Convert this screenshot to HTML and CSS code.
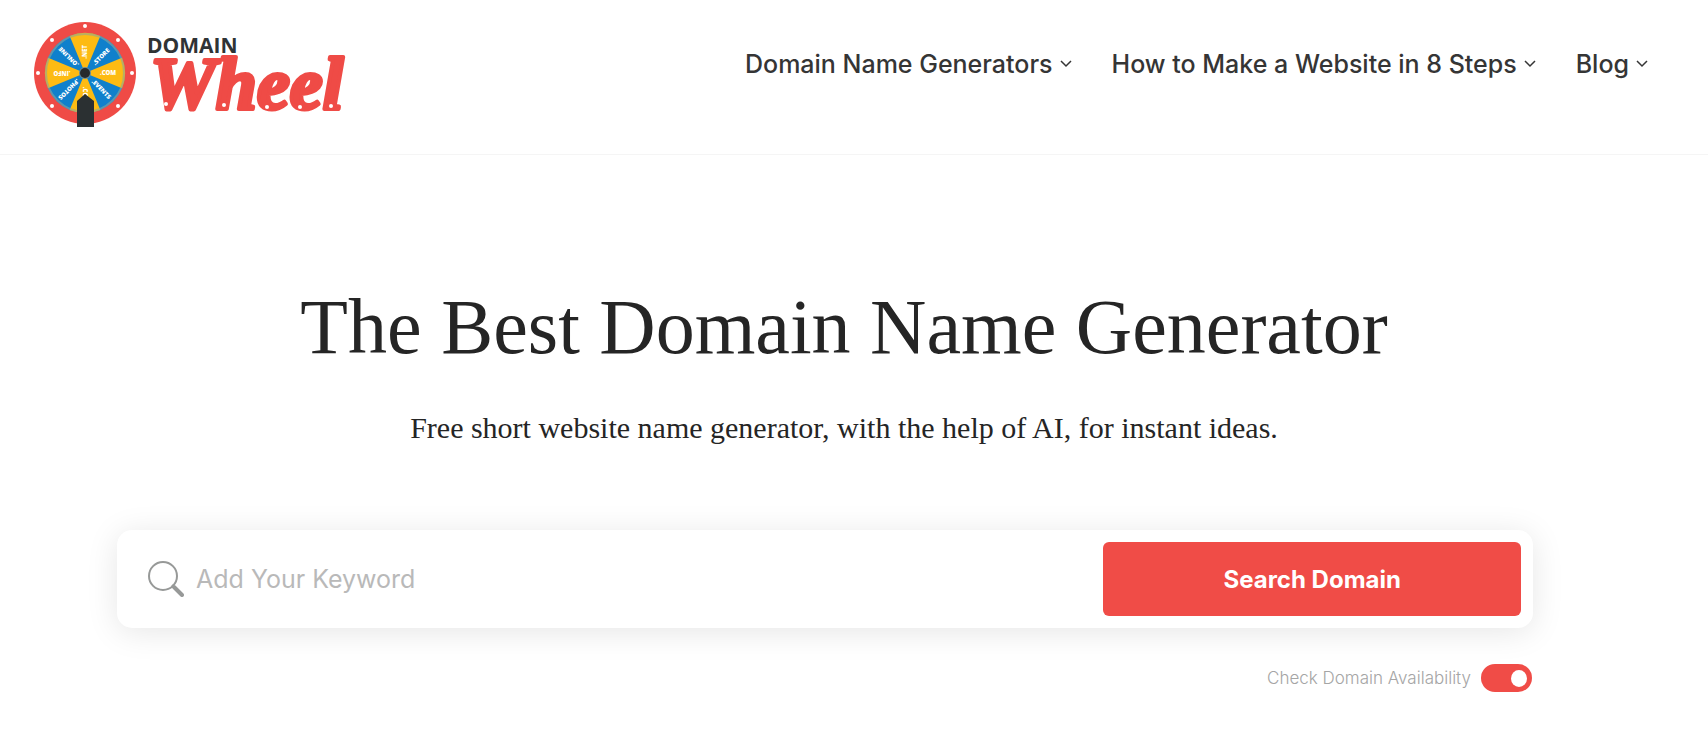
FILE: index.html
```html
<!DOCTYPE html>
<html lang="en">
<head>
  <meta charset="UTF-8">
  <meta name="viewport" content="width=device-width, initial-scale=1.0">
  <title>Domain Wheel</title>
  <link rel="stylesheet" href="styles.css">
</head>
<body>
  <header class="header">
    <a class="logo" href="#" aria-label="Domain Wheel">
      <svg width="316" height="106" viewBox="0 0 316 106">
        <!-- Wheel -->
        <circle cx="51" cy="51" r="51" fill="#ef4b46"/>
        <circle cx="51" cy="51" r="40" fill="#0f80cc"/>
        <g fill="#fdbb13">
          <path d="M51 51 L35.7 14 A40 40 0 0 1 66.3 14 Z"/>
          <path d="M51 51 L88 35.7 A40 40 0 0 1 88 66.3 Z"/>
          <path d="M51 51 L66.3 88 A40 40 0 0 1 35.7 88 Z"/>
          <path d="M51 51 L14 66.3 A40 40 0 0 1 14 35.7 Z"/>
        </g>
        <circle cx="51" cy="51" r="39" fill="none" stroke="#8aa79b" stroke-width="2" opacity="0.6"/>
        <g fill="#fff">
          <circle cx="51" cy="4" r="2"/>
          <circle cx="84" cy="18" r="2"/>
          <circle cx="98" cy="51" r="2"/>
          <circle cx="84" cy="84" r="2"/>
          <circle cx="18" cy="84" r="2"/>
          <circle cx="4" cy="51" r="2"/>
          <circle cx="18" cy="18" r="2"/>
        </g>
        <g class="wheel-text">
          <text x="74" y="53">.COM</text>
          <text x="74" y="53" transform="rotate(45 51 51)">.EVENTS</text>
          <text x="70" y="53" transform="rotate(90 51 51)">.CO</text>
          <text x="74" y="53" transform="rotate(135 51 51)">.PHOTOS</text>
          <text x="74" y="53" transform="rotate(180 51 51)">.INFO</text>
          <text x="74" y="53" transform="rotate(225 51 51)">.ONLINE</text>
          <text x="72" y="53" transform="rotate(270 51 51)">.NET</text>
          <text x="74" y="53" transform="rotate(315 51 51)">.STORE</text>
        </g>
        <circle cx="51" cy="51" r="6" fill="#63899a"/>
        <circle cx="51" cy="51" r="5" fill="#262b2d"/>
        <path d="M43 105 V79 L51 72 L60 79 V105 Z" fill="#2b3032"/>
        <!-- Name -->
        <text class="logo-top" x="113" y="31">DOMAIN</text>
        <text class="logo-name" x="116" y="87">Wheel</text>
        <g fill="#fff">
          <circle cx="132" cy="82" r="2"/>
          <circle cx="190" cy="83" r="2"/>
          <circle cx="233" cy="85" r="2"/>
          <circle cx="266" cy="85" r="2"/>
          <circle cx="297" cy="84" r="2"/>
        </g>
      </svg>
    </a>
    <nav class="nav">
      <a href="#">Domain Name Generators
        <svg class="chevron" width="12" height="8" viewBox="0 0 12 8"><path d="M1 1 L6 6 L11 1"/></svg>
      </a>
      <a href="#">How to Make a Website in 8 Steps
        <svg class="chevron" width="12" height="8" viewBox="0 0 12 8"><path d="M1 1 L6 6 L11 1"/></svg>
      </a>
      <a href="#">Blog
        <svg class="chevron" width="12" height="8" viewBox="0 0 12 8"><path d="M1 1 L6 6 L11 1"/></svg>
      </a>
    </nav>
  </header>

  <main class="hero">
    <h1>The Best Domain Name Generator</h1>
    <p class="subtitle">Free short website name generator, with the help of AI, for instant ideas.</p>

    <form class="search">
      <div class="search-box">
        <label class="search-icon" for="keyword" aria-label="Keyword">
          <svg width="36" height="36" viewBox="0 0 36 36">
            <circle cx="15" cy="15" r="14"/>
            <path class="handle" d="M26 26 L34 34"/>
            <path d="M24 24 L27 27"/>
          </svg>
        </label>
        <input type="text" id="keyword" class="keyword" placeholder="Add Your Keyword">
        <button type="submit" class="search-button">Search Domain</button>
      </div>
      <div class="availability">
        <label for="availability">Check Domain Availability</label>
        <input type="checkbox" id="availability" class="toggle" checked>
      </div>
    </form>
  </main>
</body>
</html>
```

FILE: styles.css
```css
* {
  box-sizing: border-box;
}
body {
  margin: 0;
  background-color: #fff;
  color: #252525;
  font-family: Inter, sans-serif;
}

/* Header */
.header {
  display: flex;
  justify-content: space-between;
  align-items: flex-start;
  padding: 22px 60px 26px 34px;
  border-bottom: 1px solid #f5f5f5;
}
.logo svg {
  display: block;
}
.wheel-text {
  fill: #fff;
  font-family: "Open Sans", sans-serif;
  font-size: 6px;
  font-weight: 800;
  text-anchor: middle;
}
.logo-top {
  fill: #2f3335;
  font-family: "Open Sans", sans-serif;
  font-size: 21px;
  font-weight: 700;
}
.logo-name {
  fill: #ef4b46;
  stroke: #ef4b46;
  stroke-width: 4px;
  stroke-linejoin: round;
  font-family: "Liberation Serif", serif;
  font-size: 74px;
  font-style: italic;
  font-weight: 700;
}
.nav {
  display: flex;
  gap: 40px;
  padding-top: 27px;
}
.nav a {
  display: flex;
  align-items: center;
  gap: 7px;
  color: #353535;
  font-family: Inter, sans-serif;
  font-size: 25px;
  font-weight: 500;
  line-height: 30px;
  text-decoration: none;
  white-space: nowrap;
}
.chevron {
  fill: none;
  stroke: #353535;
  stroke-width: 1.5px;
}

/* Hero */
.hero {
  padding: 120px 20px 40px 0;
  text-align: center;
}
h1 {
  margin: 0;
  font-family: "Liberation Serif", serif;
  font-size: 78px;
  font-weight: 400;
  line-height: 104px;
}
.subtitle {
  margin: 28px 0 0;
  font-family: "Liberation Serif", serif;
  font-size: 30px;
  line-height: 42px;
}

/* Search */
.search {
  margin: 81px 155px 0 117px;
}
.search-box {
  display: flex;
  align-items: center;
  padding: 12px;
  background: #fff;
  border-radius: 15px;
  box-shadow: 0 4px 32px rgba(0, 0, 0, 0.1);
}
.search-icon {
  padding: 0 12px 0 19px;
}
.search-icon svg {
  display: block;
  fill: none;
  stroke: #979998;
  stroke-width: 2px;
}
.search-icon .handle {
  stroke-width: 4px;
  stroke-linecap: round;
}
.keyword {
  flex: 1;
  min-width: 0;
  padding: 0;
  border: none;
  outline: none;
  background: none;
  color: #353535;
  font-family: Inter, sans-serif;
  font-size: 25px;
}
.keyword::placeholder {
  color: #b9b9b9;
}
.search-button {
  width: 30%;
  height: 74px;
  border: none;
  border-radius: 6px;
  background: #f04c47;
  color: #fff;
  font-family: Inter, sans-serif;
  font-size: 24px;
  font-weight: 700;
  cursor: pointer;
}
.availability {
  display: flex;
  justify-content: flex-end;
  align-items: center;
  gap: 10px;
  margin-top: 36px;
  padding-right: 1px;
  color: #a5a5a5;
  font-size: 17px;
  font-weight: 300;
}
.toggle {
  display: flex;
  justify-content: flex-end;
  align-items: center;
  width: 51px;
  height: 28px;
  margin: 0;
  padding: 0 5px;
  border-radius: 14px;
  background: #ccc;
  appearance: none;
  cursor: pointer;
}
.toggle:checked {
  background: #f04c47;
}
.toggle::before {
  content: "";
  width: 16px;
  height: 17px;
  border-radius: 50%;
  background: #fff;
}
```
